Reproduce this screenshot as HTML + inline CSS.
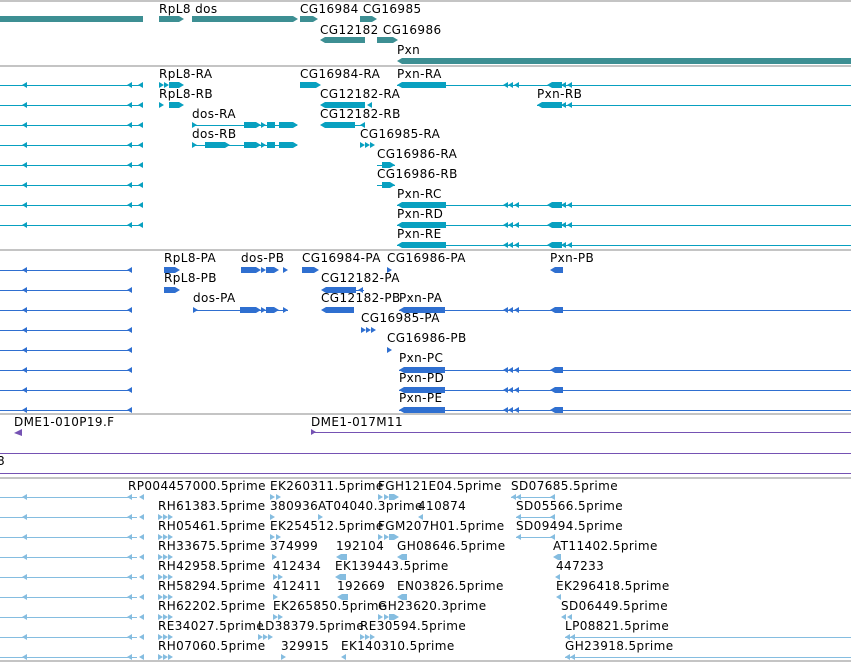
<!DOCTYPE html>
<html><head><meta charset="utf-8">
<style>
html,body{margin:0;padding:0;background:#fff;width:851px;height:662px;overflow:hidden;position:relative}
.t{position:absolute;font:12px "DejaVu Sans",sans-serif;line-height:12px;white-space:nowrap;color:#000;letter-spacing:0.4px}
.ln{position:absolute;height:1px;background:currentColor}
.bx{position:absolute;background:currentColor}
.L{position:absolute;width:0;height:0;border-top:3px solid transparent;border-bottom:3px solid transparent;border-right:5px solid currentColor}
.R{position:absolute;width:0;height:0;border-top:3px solid transparent;border-bottom:3px solid transparent;border-left:5px solid currentColor}
.sep{position:absolute;left:0;width:851px;height:2px;background:#c4c4c4}
.c1{color:#3d8f93}.c2{color:#08a0c0}.c3{color:#2f6fd0}.c4{color:#7552b3}.c5{color:#85bde0}
</style></head><body>
<div class="sep" style="top:0"></div>
<div class="sep" style="top:65px"></div>
<div class="sep" style="top:249px"></div>
<div class="sep" style="top:413px"></div>
<div class="sep" style="top:477px"></div>
<div class="sep" style="top:660px"></div>

<div class="c1">
<div class="bx" style="left:0;top:16px;width:143px;height:6px"></div>
<div class="bx" style="left:159px;top:16px;width:20px;height:6px"></div><div class="R" style="left:179px;top:16px"></div>
<div class="bx" style="left:192px;top:16px;width:101px;height:6px"></div><div class="R" style="left:293px;top:16px"></div>
<div class="bx" style="left:300px;top:16px;width:13px;height:6px"></div><div class="R" style="left:313px;top:16px"></div>
<div class="bx" style="left:360px;top:16px;width:12px;height:6px"></div><div class="R" style="left:372px;top:16px"></div>
<div class="L" style="left:320px;top:37px"></div><div class="bx" style="left:325px;top:37px;width:40px;height:6px"></div>
<div class="bx" style="left:377px;top:37px;width:16px;height:6px"></div><div class="R" style="left:393px;top:37px"></div>
<div class="L" style="left:397px;top:58px"></div><div class="bx" style="left:402px;top:58px;width:449px;height:6px"></div>
</div>
<div class="t" style="left:159px;top:3px">RpL8 dos</div>
<div class="t" style="left:300px;top:3px">CG16984 CG16985</div>
<div class="t" style="left:320px;top:24px">CG12182 CG16986</div>
<div class="t" style="left:397px;top:44px">Pxn</div>

<div class="c2">
<div class="ln" style="left:0;top:85px;width:143px"></div><div class="L" style="left:22px;top:82px"></div><div class="L" style="left:127px;top:82px"></div><div class="L" style="left:138px;top:82px"></div>
<div class="ln" style="left:0;top:105px;width:143px"></div><div class="L" style="left:22px;top:102px"></div><div class="L" style="left:127px;top:102px"></div><div class="L" style="left:138px;top:102px"></div>
<div class="ln" style="left:0;top:125px;width:143px"></div><div class="L" style="left:22px;top:122px"></div><div class="L" style="left:127px;top:122px"></div><div class="L" style="left:138px;top:122px"></div>
<div class="ln" style="left:0;top:145px;width:143px"></div><div class="L" style="left:22px;top:142px"></div><div class="L" style="left:127px;top:142px"></div><div class="L" style="left:138px;top:142px"></div>
<div class="ln" style="left:0;top:165px;width:143px"></div><div class="L" style="left:22px;top:162px"></div><div class="L" style="left:127px;top:162px"></div><div class="L" style="left:138px;top:162px"></div>
<div class="ln" style="left:0;top:185px;width:143px"></div><div class="L" style="left:22px;top:182px"></div><div class="L" style="left:127px;top:182px"></div><div class="L" style="left:138px;top:182px"></div>
<div class="ln" style="left:0;top:205px;width:143px"></div><div class="L" style="left:22px;top:202px"></div><div class="L" style="left:127px;top:202px"></div><div class="L" style="left:138px;top:202px"></div>
<div class="ln" style="left:0;top:225px;width:143px"></div><div class="L" style="left:22px;top:222px"></div><div class="L" style="left:127px;top:222px"></div><div class="L" style="left:138px;top:222px"></div>
<div class="R" style="left:159px;top:82px"></div><div class="R" style="left:164px;top:82px"></div><div class="bx" style="left:169px;top:82px;width:10px;height:6px"></div><div class="R" style="left:179px;top:82px"></div>
<div class="R" style="left:159px;top:102px"></div><div class="bx" style="left:169px;top:102px;width:10px;height:6px"></div><div class="R" style="left:179px;top:102px"></div>
<div class="bx" style="left:300px;top:82px;width:16px;height:6px"></div><div class="R" style="left:316px;top:82px"></div>
<div class="L" style="left:320px;top:102px"></div><div class="bx" style="left:325px;top:102px;width:40px;height:6px"></div><div class="L" style="left:367px;top:102px"></div>
<div class="L" style="left:320px;top:122px"></div><div class="bx" style="left:325px;top:122px;width:30px;height:6px"></div><div class="L" style="left:360px;top:122px"></div><div class="ln" style="left:355px;top:125px;width:10px"></div>
<div class="ln" style="left:192px;top:125px;width:105px"></div><div class="R" style="left:192px;top:122px"></div><div class="bx" style="left:244px;top:122px;width:12px;height:6px"></div><div class="R" style="left:256px;top:122px"></div><div class="R" style="left:261px;top:122px"></div><div class="bx" style="left:267px;top:122px;width:8px;height:6px"></div><div class="bx" style="left:279px;top:122px;width:14px;height:6px"></div><div class="R" style="left:293px;top:122px"></div>
<div class="ln" style="left:192px;top:145px;width:105px"></div><div class="R" style="left:192px;top:142px"></div><div class="bx" style="left:205px;top:142px;width:20px;height:6px"></div><div class="R" style="left:225px;top:142px"></div><div class="bx" style="left:244px;top:142px;width:12px;height:6px"></div><div class="R" style="left:256px;top:142px"></div><div class="R" style="left:261px;top:142px"></div><div class="bx" style="left:267px;top:142px;width:8px;height:6px"></div><div class="bx" style="left:279px;top:142px;width:14px;height:6px"></div><div class="R" style="left:293px;top:142px"></div>
<div class="R" style="left:360px;top:142px"></div><div class="R" style="left:365px;top:142px"></div><div class="R" style="left:370px;top:142px"></div>
<div class="ln" style="left:377px;top:165px;width:18px"></div><div class="bx" style="left:382px;top:162px;width:8px;height:6px"></div><div class="R" style="left:390px;top:162px"></div>
<div class="ln" style="left:377px;top:185px;width:18px"></div><div class="bx" style="left:382px;top:182px;width:8px;height:6px"></div><div class="R" style="left:390px;top:182px"></div>
<div class="ln" style="left:397px;top:85px;width:454px"></div><div class="L" style="left:397px;top:82px"></div><div class="bx" style="left:402px;top:82px;width:44px;height:6px"></div><div class="L" style="left:503px;top:82px"></div><div class="L" style="left:508px;top:82px"></div><div class="L" style="left:514px;top:82px"></div><div class="bx" style="left:552px;top:82px;width:10px;height:6px"></div><div class="L" style="left:547px;top:82px"></div><div class="L" style="left:561px;top:82px"></div><div class="L" style="left:567px;top:82px"></div>
<div class="ln" style="left:537px;top:105px;width:314px"></div><div class="L" style="left:537px;top:102px"></div><div class="bx" style="left:542px;top:102px;width:20px;height:6px"></div><div class="L" style="left:561px;top:102px"></div><div class="L" style="left:567px;top:102px"></div>
<div class="ln" style="left:397px;top:205px;width:454px"></div><div class="L" style="left:397px;top:202px"></div><div class="bx" style="left:402px;top:202px;width:44px;height:6px"></div><div class="L" style="left:503px;top:202px"></div><div class="L" style="left:508px;top:202px"></div><div class="L" style="left:514px;top:202px"></div><div class="L" style="left:547px;top:202px"></div><div class="bx" style="left:552px;top:202px;width:10px;height:6px"></div><div class="L" style="left:561px;top:202px"></div><div class="L" style="left:567px;top:202px"></div>
<div class="ln" style="left:397px;top:225px;width:454px"></div><div class="L" style="left:397px;top:222px"></div><div class="bx" style="left:402px;top:222px;width:44px;height:6px"></div><div class="L" style="left:503px;top:222px"></div><div class="L" style="left:508px;top:222px"></div><div class="L" style="left:514px;top:222px"></div><div class="L" style="left:547px;top:222px"></div><div class="bx" style="left:552px;top:222px;width:10px;height:6px"></div><div class="L" style="left:561px;top:222px"></div><div class="L" style="left:567px;top:222px"></div>
<div class="ln" style="left:397px;top:245px;width:454px"></div><div class="L" style="left:397px;top:242px"></div><div class="bx" style="left:402px;top:242px;width:44px;height:6px"></div><div class="L" style="left:503px;top:242px"></div><div class="L" style="left:508px;top:242px"></div><div class="L" style="left:514px;top:242px"></div><div class="L" style="left:547px;top:242px"></div><div class="bx" style="left:552px;top:242px;width:10px;height:6px"></div><div class="L" style="left:561px;top:242px"></div><div class="L" style="left:567px;top:242px"></div>
</div>
<div class="t" style="left:159px;top:68px">RpL8-RA</div>
<div class="t" style="left:300px;top:68px">CG16984-RA</div>
<div class="t" style="left:397px;top:68px">Pxn-RA</div>
<div class="t" style="left:159px;top:88px">RpL8-RB</div>
<div class="t" style="left:320px;top:88px">CG12182-RA</div>
<div class="t" style="left:537px;top:88px">Pxn-RB</div>
<div class="t" style="left:192px;top:108px">dos-RA</div>
<div class="t" style="left:320px;top:108px">CG12182-RB</div>
<div class="t" style="left:192px;top:128px">dos-RB</div>
<div class="t" style="left:360px;top:128px">CG16985-RA</div>
<div class="t" style="left:377px;top:148px">CG16986-RA</div>
<div class="t" style="left:377px;top:168px">CG16986-RB</div>
<div class="t" style="left:397px;top:188px">Pxn-RC</div>
<div class="t" style="left:397px;top:208px">Pxn-RD</div>
<div class="t" style="left:397px;top:228px">Pxn-RE</div>

<div class="c3">
<div class="ln" style="left:0;top:270px;width:132px"></div><div class="L" style="left:22px;top:267px"></div><div class="L" style="left:127px;top:267px"></div>
<div class="ln" style="left:0;top:290px;width:132px"></div><div class="L" style="left:22px;top:287px"></div><div class="L" style="left:127px;top:287px"></div>
<div class="ln" style="left:0;top:310px;width:132px"></div><div class="L" style="left:22px;top:307px"></div><div class="L" style="left:127px;top:307px"></div>
<div class="ln" style="left:0;top:330px;width:132px"></div><div class="L" style="left:22px;top:327px"></div><div class="L" style="left:127px;top:327px"></div>
<div class="ln" style="left:0;top:350px;width:132px"></div><div class="L" style="left:22px;top:347px"></div><div class="L" style="left:127px;top:347px"></div>
<div class="ln" style="left:0;top:370px;width:132px"></div><div class="L" style="left:22px;top:367px"></div><div class="L" style="left:127px;top:367px"></div>
<div class="ln" style="left:0;top:390px;width:132px"></div><div class="L" style="left:22px;top:387px"></div><div class="L" style="left:127px;top:387px"></div>
<div class="ln" style="left:0;top:410px;width:132px"></div><div class="L" style="left:22px;top:407px"></div><div class="L" style="left:127px;top:407px"></div>
<div class="bx" style="left:164px;top:267px;width:11px;height:6px"></div><div class="R" style="left:175px;top:267px"></div>
<div class="bx" style="left:164px;top:287px;width:11px;height:6px"></div><div class="R" style="left:175px;top:287px"></div>
<div class="bx" style="left:241px;top:267px;width:15px;height:6px"></div><div class="R" style="left:256px;top:267px"></div><div class="R" style="left:261px;top:267px"></div><div class="bx" style="left:266px;top:267px;width:8px;height:6px"></div><div class="R" style="left:274px;top:267px"></div><div class="R" style="left:283px;top:267px"></div>
<div class="bx" style="left:302px;top:267px;width:12px;height:6px"></div><div class="R" style="left:314px;top:267px"></div>
<div class="R" style="left:387px;top:267px"></div>
<div class="L" style="left:550px;top:267px"></div><div class="bx" style="left:555px;top:267px;width:8px;height:6px"></div>
<div class="L" style="left:321px;top:287px"></div><div class="bx" style="left:326px;top:287px;width:30px;height:6px"></div><div class="ln" style="left:356px;top:290px;width:8px"></div><div class="L" style="left:358px;top:287px"></div>
<div class="ln" style="left:193px;top:310px;width:95px"></div><div class="R" style="left:193px;top:307px"></div><div class="bx" style="left:240px;top:307px;width:16px;height:6px"></div><div class="R" style="left:256px;top:307px"></div><div class="R" style="left:261px;top:307px"></div><div class="bx" style="left:266px;top:307px;width:8px;height:6px"></div><div class="R" style="left:274px;top:307px"></div><div class="R" style="left:283px;top:307px"></div>
<div class="L" style="left:321px;top:307px"></div><div class="bx" style="left:326px;top:307px;width:28px;height:6px"></div>
<div class="R" style="left:361px;top:327px"></div><div class="R" style="left:366px;top:327px"></div><div class="R" style="left:371px;top:327px"></div>
<div class="R" style="left:387px;top:347px"></div>
<div class="ln" style="left:399px;top:310px;width:452px"></div><div class="L" style="left:399px;top:307px"></div><div class="bx" style="left:404px;top:307px;width:41px;height:6px"></div><div class="L" style="left:503px;top:307px"></div><div class="L" style="left:508px;top:307px"></div><div class="L" style="left:514px;top:307px"></div><div class="L" style="left:550px;top:307px"></div><div class="bx" style="left:555px;top:307px;width:8px;height:6px"></div>
<div class="ln" style="left:399px;top:370px;width:452px"></div><div class="L" style="left:399px;top:367px"></div><div class="bx" style="left:404px;top:367px;width:41px;height:6px"></div><div class="L" style="left:503px;top:367px"></div><div class="L" style="left:508px;top:367px"></div><div class="L" style="left:514px;top:367px"></div><div class="L" style="left:550px;top:367px"></div><div class="bx" style="left:555px;top:367px;width:8px;height:6px"></div>
<div class="ln" style="left:399px;top:390px;width:452px"></div><div class="L" style="left:399px;top:387px"></div><div class="bx" style="left:404px;top:387px;width:41px;height:6px"></div><div class="L" style="left:503px;top:387px"></div><div class="L" style="left:508px;top:387px"></div><div class="L" style="left:514px;top:387px"></div><div class="L" style="left:550px;top:387px"></div><div class="bx" style="left:555px;top:387px;width:8px;height:6px"></div>
<div class="ln" style="left:399px;top:410px;width:452px"></div><div class="L" style="left:399px;top:407px"></div><div class="bx" style="left:404px;top:407px;width:41px;height:6px"></div><div class="L" style="left:503px;top:407px"></div><div class="L" style="left:508px;top:407px"></div><div class="L" style="left:514px;top:407px"></div><div class="L" style="left:550px;top:407px"></div><div class="bx" style="left:555px;top:407px;width:8px;height:6px"></div>
</div>
<div class="t" style="left:164px;top:252px">RpL8-PA</div>
<div class="t" style="left:241px;top:252px">dos-PB</div>
<div class="t" style="left:302px;top:252px">CG16984-PA</div>
<div class="t" style="left:387px;top:252px">CG16986-PA</div>
<div class="t" style="left:550px;top:252px">Pxn-PB</div>
<div class="t" style="left:164px;top:272px">RpL8-PB</div>
<div class="t" style="left:321px;top:272px">CG12182-PA</div>
<div class="t" style="left:193px;top:292px">dos-PA</div>
<div class="t" style="left:321px;top:292px">CG12182-PB</div>
<div class="t" style="left:399px;top:292px">Pxn-PA</div>
<div class="t" style="left:361px;top:312px">CG16985-PA</div>
<div class="t" style="left:387px;top:332px">CG16986-PB</div>
<div class="t" style="left:399px;top:352px">Pxn-PC</div>
<div class="t" style="left:399px;top:372px">Pxn-PD</div>
<div class="t" style="left:399px;top:392px">Pxn-PE</div>

<div class="c4">
<div class="L" style="left:14px;top:429px;border-right-width:8px;border-top-width:4px;border-bottom-width:3px"></div>
<div class="R" style="left:311px;top:429px"></div><div class="ln" style="left:311px;top:432px;width:540px"></div>
<div class="ln" style="left:0;top:453px;width:851px"></div>
<div class="ln" style="left:0;top:473px;width:851px"></div>
</div>
<div class="t" style="left:14px;top:416px">DME1-010P19.F</div>
<div class="t" style="left:311px;top:416px">DME1-017M11</div>
<div class="t" style="left:-3px;top:455px">8</div>

<div class="c5">
<div class="ln" style="left:0;top:497px;width:137px"></div><div class="L" style="left:22px;top:494px"></div><div class="L" style="left:127px;top:494px"></div><div class="L" style="left:139px;top:494px"></div>
<div class="ln" style="left:0;top:517px;width:137px"></div><div class="L" style="left:22px;top:514px"></div><div class="L" style="left:127px;top:514px"></div><div class="L" style="left:139px;top:514px"></div>
<div class="ln" style="left:0;top:537px;width:137px"></div><div class="L" style="left:22px;top:534px"></div><div class="L" style="left:127px;top:534px"></div><div class="L" style="left:139px;top:534px"></div>
<div class="ln" style="left:0;top:557px;width:137px"></div><div class="L" style="left:22px;top:554px"></div><div class="L" style="left:127px;top:554px"></div><div class="L" style="left:139px;top:554px"></div>
<div class="ln" style="left:0;top:577px;width:137px"></div><div class="L" style="left:22px;top:574px"></div><div class="L" style="left:127px;top:574px"></div><div class="L" style="left:139px;top:574px"></div>
<div class="ln" style="left:0;top:597px;width:137px"></div><div class="L" style="left:22px;top:594px"></div><div class="L" style="left:127px;top:594px"></div><div class="L" style="left:139px;top:594px"></div>
<div class="ln" style="left:0;top:617px;width:137px"></div><div class="L" style="left:22px;top:614px"></div><div class="L" style="left:127px;top:614px"></div><div class="L" style="left:139px;top:614px"></div>
<div class="ln" style="left:0;top:637px;width:137px"></div><div class="L" style="left:22px;top:634px"></div><div class="L" style="left:127px;top:634px"></div><div class="L" style="left:139px;top:634px"></div>
<div class="ln" style="left:0;top:657px;width:137px"></div><div class="L" style="left:22px;top:654px"></div><div class="L" style="left:127px;top:654px"></div><div class="L" style="left:139px;top:654px"></div>
<div class="R" style="left:158px;top:514px"></div><div class="R" style="left:163px;top:514px"></div><div class="R" style="left:168px;top:514px"></div>
<div class="R" style="left:158px;top:534px"></div><div class="R" style="left:163px;top:534px"></div><div class="R" style="left:168px;top:534px"></div>
<div class="R" style="left:158px;top:554px"></div><div class="R" style="left:163px;top:554px"></div><div class="R" style="left:168px;top:554px"></div>
<div class="R" style="left:158px;top:574px"></div><div class="R" style="left:163px;top:574px"></div><div class="R" style="left:168px;top:574px"></div>
<div class="R" style="left:158px;top:594px"></div><div class="R" style="left:163px;top:594px"></div><div class="R" style="left:168px;top:594px"></div>
<div class="R" style="left:158px;top:614px"></div><div class="R" style="left:163px;top:614px"></div><div class="R" style="left:168px;top:614px"></div>
<div class="R" style="left:158px;top:634px"></div><div class="R" style="left:163px;top:634px"></div><div class="R" style="left:168px;top:634px"></div>
<div class="R" style="left:158px;top:654px"></div><div class="R" style="left:163px;top:654px"></div><div class="R" style="left:168px;top:654px"></div>
<div class="R" style="left:270px;top:494px"></div><div class="R" style="left:276px;top:494px"></div>
<div class="R" style="left:270px;top:514px"></div>
<div class="R" style="left:270px;top:534px"></div><div class="R" style="left:276px;top:534px"></div>
<div class="R" style="left:272px;top:554px"></div>
<div class="R" style="left:273px;top:574px"></div><div class="R" style="left:278px;top:574px"></div>
<div class="R" style="left:273px;top:594px"></div>
<div class="R" style="left:273px;top:614px"></div><div class="R" style="left:278px;top:614px"></div>
<div class="R" style="left:258px;top:634px"></div><div class="R" style="left:263px;top:634px"></div><div class="R" style="left:268px;top:634px"></div>
<div class="R" style="left:281px;top:654px"></div>
<div class="R" style="left:318px;top:514px"></div>
<div class="L" style="left:336px;top:554px"></div><div class="bx" style="left:341px;top:554px;width:6px;height:6px"></div>
<div class="L" style="left:335px;top:574px"></div><div class="bx" style="left:340px;top:574px;width:6px;height:6px"></div>
<div class="L" style="left:337px;top:594px"></div><div class="bx" style="left:342px;top:594px;width:6px;height:6px"></div>
<div class="R" style="left:360px;top:634px"></div><div class="R" style="left:365px;top:634px"></div><div class="R" style="left:370px;top:634px"></div>
<div class="L" style="left:341px;top:654px"></div>
<div class="R" style="left:378px;top:494px"></div><div class="R" style="left:384px;top:494px"></div><div class="bx" style="left:389px;top:494px;width:5px;height:6px"></div><div class="R" style="left:394px;top:494px"></div>
<div class="L" style="left:418px;top:514px"></div>
<div class="R" style="left:378px;top:534px"></div><div class="R" style="left:384px;top:534px"></div><div class="bx" style="left:389px;top:534px;width:5px;height:6px"></div><div class="R" style="left:394px;top:534px"></div>
<div class="L" style="left:397px;top:554px"></div><div class="bx" style="left:402px;top:554px;width:5px;height:6px"></div>
<div class="L" style="left:397px;top:594px"></div><div class="bx" style="left:402px;top:594px;width:5px;height:6px"></div>
<div class="R" style="left:378px;top:614px"></div><div class="R" style="left:384px;top:614px"></div><div class="bx" style="left:389px;top:614px;width:5px;height:6px"></div><div class="R" style="left:394px;top:614px"></div>
<div class="ln" style="left:511px;top:497px;width:44px"></div><div class="L" style="left:511px;top:494px"></div><div class="L" style="left:516px;top:494px"></div><div class="L" style="left:550px;top:494px"></div>
<div class="ln" style="left:516px;top:517px;width:39px"></div><div class="L" style="left:516px;top:514px"></div><div class="L" style="left:550px;top:514px"></div>
<div class="ln" style="left:516px;top:537px;width:39px"></div><div class="L" style="left:516px;top:534px"></div><div class="L" style="left:550px;top:534px"></div>
<div class="L" style="left:553px;top:554px"></div><div class="bx" style="left:558px;top:554px;width:3px;height:6px"></div>
<div class="L" style="left:555px;top:574px"></div>
<div class="L" style="left:556px;top:594px"></div>
<div class="L" style="left:561px;top:614px"></div><div class="L" style="left:567px;top:614px"></div>
<div class="ln" style="left:565px;top:637px;width:286px"></div><div class="L" style="left:565px;top:634px"></div><div class="L" style="left:570px;top:634px"></div>
<div class="ln" style="left:565px;top:657px;width:286px"></div><div class="L" style="left:565px;top:654px"></div><div class="L" style="left:570px;top:654px"></div>
</div>
<div class="t" style="left:128px;top:480px">RP004457000.5prime</div>
<div class="t" style="left:270px;top:480px">EK260311.5prime</div>
<div class="t" style="left:378px;top:480px">FGH121E04.5prime</div>
<div class="t" style="left:511px;top:480px">SD07685.5prime</div>
<div class="t" style="left:158px;top:500px">RH61383.5prime</div>
<div class="t" style="left:270px;top:500px">380936</div>
<div class="t" style="left:318px;top:500px">AT04040.3prime</div>
<div class="t" style="left:418px;top:500px">410874</div>
<div class="t" style="left:516px;top:500px">SD05566.5prime</div>
<div class="t" style="left:158px;top:520px">RH05461.5prime</div>
<div class="t" style="left:270px;top:520px">EK254512.5prime</div>
<div class="t" style="left:378px;top:520px">FGM207H01.5prime</div>
<div class="t" style="left:516px;top:520px">SD09494.5prime</div>
<div class="t" style="left:158px;top:540px">RH33675.5prime</div>
<div class="t" style="left:270px;top:540px">374999</div>
<div class="t" style="left:336px;top:540px">192104</div>
<div class="t" style="left:397px;top:540px">GH08646.5prime</div>
<div class="t" style="left:553px;top:540px">AT11402.5prime</div>
<div class="t" style="left:158px;top:560px">RH42958.5prime</div>
<div class="t" style="left:273px;top:560px">412434</div>
<div class="t" style="left:335px;top:560px">EK139443.5prime</div>
<div class="t" style="left:556px;top:560px">447233</div>
<div class="t" style="left:158px;top:580px">RH58294.5prime</div>
<div class="t" style="left:273px;top:580px">412411</div>
<div class="t" style="left:337px;top:580px">192669</div>
<div class="t" style="left:397px;top:580px">EN03826.5prime</div>
<div class="t" style="left:556px;top:580px">EK296418.5prime</div>
<div class="t" style="left:158px;top:600px">RH62202.5prime</div>
<div class="t" style="left:273px;top:600px">EK265850.5prime</div>
<div class="t" style="left:378px;top:600px">GH23620.3prime</div>
<div class="t" style="left:561px;top:600px">SD06449.5prime</div>
<div class="t" style="left:158px;top:620px">RE34027.5prime</div>
<div class="t" style="left:258px;top:620px">LD38379.5prime</div>
<div class="t" style="left:360px;top:620px">RE30594.5prime</div>
<div class="t" style="left:565px;top:620px">LP08821.5prime</div>
<div class="t" style="left:158px;top:640px">RH07060.5prime</div>
<div class="t" style="left:281px;top:640px">329915</div>
<div class="t" style="left:341px;top:640px">EK140310.5prime</div>
<div class="t" style="left:565px;top:640px">GH23918.5prime</div>
</body></html>
